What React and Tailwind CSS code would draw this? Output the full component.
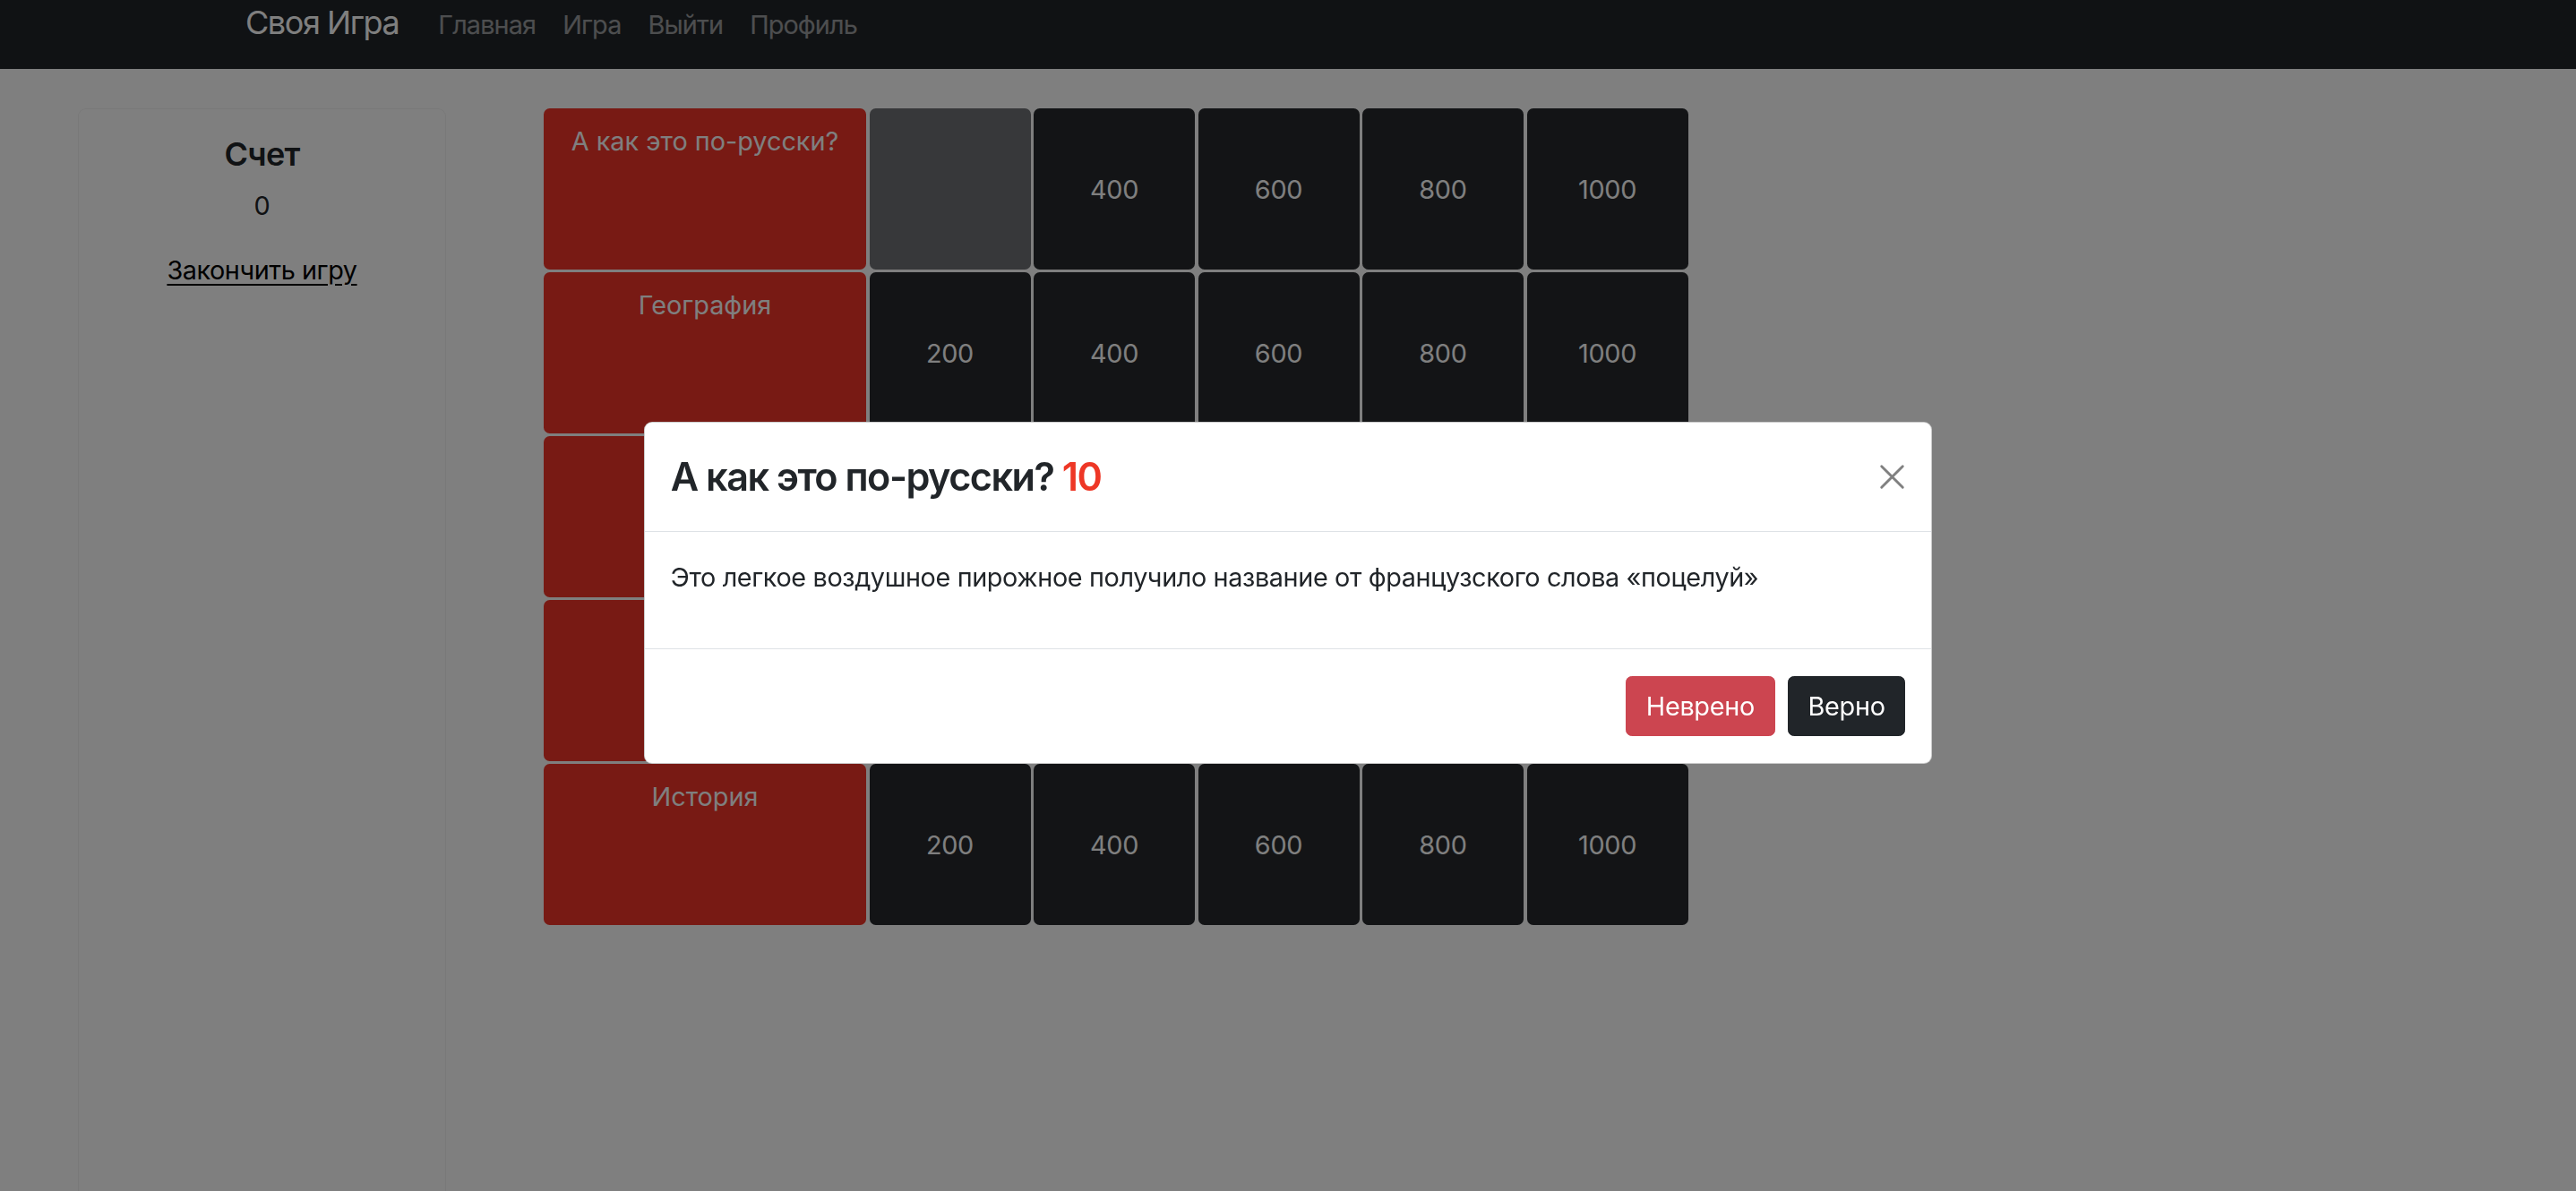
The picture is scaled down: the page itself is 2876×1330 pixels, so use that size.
const rows = [
  { title: 'А как это по-русски?', values: [null, 400, 600, 800, 1000] },
  { title: 'География', values: [200, 400, 600, 800, 1000] },
  { title: 'Кино', values: [200, 400, 600, 800, 1000] },
  { title: 'Музыка', values: [200, 400, 600, 800, 1000] },
  { title: 'История', values: [200, 400, 600, 800, 1000] },
]

function CloseIcon() {
  return (
    <svg width="29" height="29" viewBox="0 0 16 16" fill="none">
      <path d="M1.5 1.5l13 13M14.5 1.5l-13 13" stroke="#808080" strokeWidth="1.6" strokeLinecap="round" />
    </svg>
  )
}

function QuestionModal() {
  return (
    <div className="fixed inset-0 z-50 flex items-center justify-center bg-black/50">
      <div className="w-[1438px] -mt-[6px] rounded-[9px] border-[1.8px] border-black/20 bg-white text-[#212529]">
        <div className="flex items-center justify-between px-[28.8px] py-[35px] border-b-[1.8px] border-[#dee2e6]">
          <h4 className="text-[43.2px] leading-[1.2] font-semibold tracking-[-0.035em]">
            А как это по-русски? <span className="text-[#ee3726]">10</span>
          </h4>
          <button type="button" className="flex items-center justify-center w-[29px] h-[29px]">
            <CloseIcon />
          </button>
        </div>
        <div className="p-[28.8px] border-b-[1.8px] border-[#dee2e6]">
          <p className="text-[28.8px] leading-[1.5] mb-[28.8px] tracking-[-0.013em]">
            Это легкое воздушное пирожное получило название от французского слова «поцелуй»
          </p>
        </div>
        <div className="flex justify-end px-[21.6px] py-[23.2px]">
          <button
            type="button"
            className="m-[7.2px] px-[21.6px] py-[10.8px] rounded-[6.75px] border-[1.8px] border-[#cc4550] bg-[#cc4550] text-white text-[28.8px] leading-[1.5] tracking-[-0.01em]"
          >
            Неврено
          </button>
          <button
            type="button"
            className="m-[7.2px] px-[21.6px] py-[10.8px] rounded-[6.75px] border-[1.8px] border-[#212529] bg-[#212529] text-white text-[28.8px] leading-[1.5] tracking-[-0.01em]"
          >
            Верно
          </button>
        </div>
      </div>
    </div>
  )
}

export default function App() {
  return (
    <div className="relative h-screen overflow-hidden bg-white font-['Inter','Noto_Sans',sans-serif] text-[#212529]">
      <nav className="h-[77px] bg-[#212529]">
        <div className="flex items-baseline pl-[274px] pt-[7px]">
          <a className="text-[36px] leading-none text-white mr-[44px] tracking-[-0.04em]">Своя Игра</a>
          <div className="flex items-baseline gap-[30px] text-[28.8px] leading-none text-white/55 tracking-[-0.03em]">
            <a>Главная</a>
            <a>Игра</a>
            <a>Выйти</a>
            <a>Профиль</a>
          </div>
        </div>
      </nav>

      <main className="flex pt-[44px]">
        <aside className="ml-[87px] w-[411px] h-[1400px] shrink-0 rounded-[9px] border-[1.8px] border-black/[0.05] bg-white pt-[28.8px] text-center">
          <h5 className="text-[36px] leading-[1.2] font-semibold mb-[14.4px] tracking-[-0.02em]">Счет</h5>
          <p className="text-[28.8px] leading-[1.5] mb-[28.8px]">0</p>
          <a className="text-[28.8px] leading-[1.5] text-black underline underline-offset-[5px] tracking-[-0.015em]">
            Закончить игру
          </a>
        </aside>

        <div className="ml-[109px] grid grid-cols-[360px_repeat(5,180px)] auto-rows-[180px] gap-x-[3.5px] gap-y-[3px] text-[28.8px] leading-[1.5] text-white">
          {rows.map((row) => (
            <div key={row.title} className="contents">
              <div className="rounded-[6.75px] bg-[#f03428] pt-[15px] text-center">{row.title}</div>
              {row.values.map((v, i) =>
                v === null ? (
                  <div key={i} className="rounded-[6.75px] bg-[#6f7175]" />
                ) : (
                  <div key={i} className="flex items-center justify-center rounded-[6.75px] bg-[#26292d] pt-[2px] tracking-[-0.01em]">
                    {v}
                  </div>
                )
              )}
            </div>
          ))}
        </div>
      </main>

      <QuestionModal />
    </div>
  )
}
